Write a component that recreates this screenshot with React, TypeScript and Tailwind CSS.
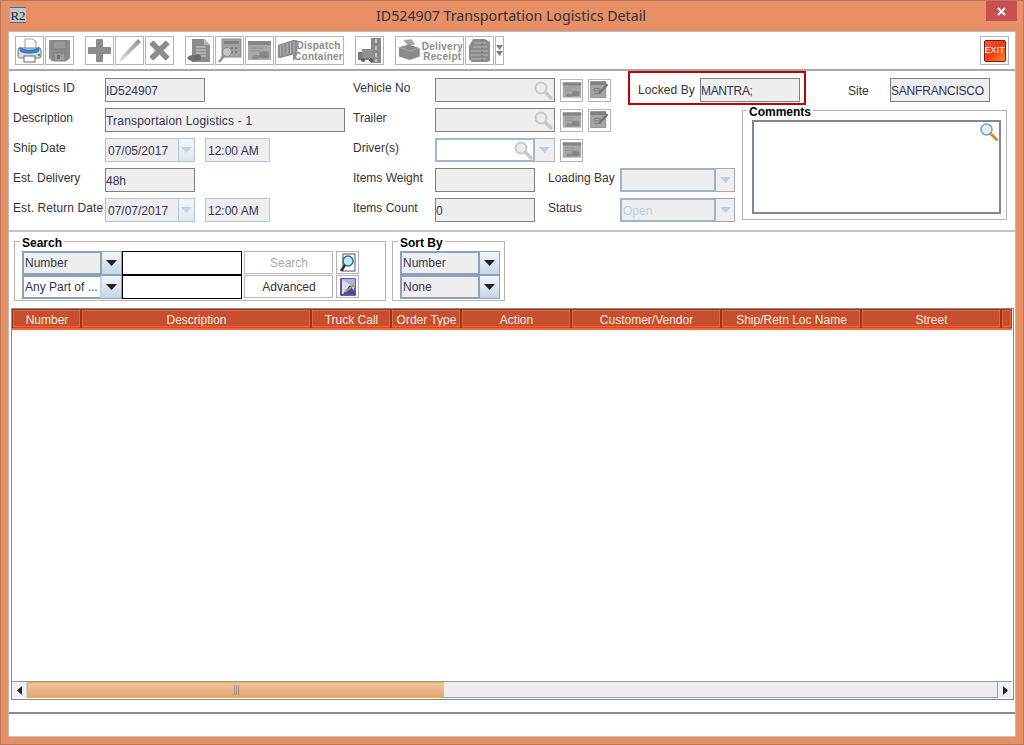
import React from "react";

const G = "#8c8c8c";

function Btn({ w = "w-[29px]", children }: { w?: string; children?: React.ReactNode }) {
  return (
    <div className={`${w} h-[29px] border border-[#b4b4b4] bg-white flex items-center justify-center overflow-hidden shrink-0`}>
      {children}
    </div>
  );
}

function Svg({ children, s = 25 }: { children: React.ReactNode; s?: number }) {
  return (
    <svg width={s} height={s} viewBox="0 0 25 25">
      {children}
    </svg>
  );
}

const PrintIcon = () => (
  <Svg>
    <path d="M8 1h8l3 3v7H8z" fill="#fff" stroke="#8aa0b5" />
    <path d="M3 10h19a2 2 0 0 1 2 2v6a2 2 0 0 1-2 2H3a2 2 0 0 1-2-2v-6a2 2 0 0 1 2-2z" fill="#d8dde2" stroke="#777" />
    <path d="M3 9c2 4 17 4 19 0v4c-3 3-16 3-19 0z" fill="#2f86d8" stroke="#1f5f9f" strokeWidth="0.6" />
    <rect x="7" y="18" width="11" height="6" fill="#fff" stroke="#666" />
    <circle cx="22" cy="17" r="1.3" fill="#3db53d" />
  </Svg>
);
const SaveIcon = () => (
  <Svg>
    <path d="M2 3a1 1 0 0 1 1-1h19a1 1 0 0 1 1 1v17l-3 3H5l-3-3z" fill="#8c8c8c" />
    <rect x="6" y="3" width="13" height="8" fill="#9a9a9a" stroke="#7d7d7d" />
    <rect x="7" y="15" width="11" height="8" fill="#a0a0a0" stroke="#7a7a7a" />
    <rect x="10" y="17" width="3" height="4" fill="#6f6f6f" />
  </Svg>
);
const PlusIcon = () => (
  <Svg>
    <path d="M10 1h5a1 1 0 0 1 1 1v7h7a1 1 0 0 1 1 1v5a1 1 0 0 1-1 1h-7v7a1 1 0 0 1-1 1h-5a1 1 0 0 1-1-1v-7H2a1 1 0 0 1-1-1v-5a1 1 0 0 1 1-1h7V2a1 1 0 0 1 1-1z" fill={G} />
  </Svg>
);
const PenIcon = () => (
  <Svg>
    <defs>
      <linearGradient id="pen" x1="0" y1="1" x2="1" y2="0">
        <stop offset="0" stopColor="#e2e2e2" />
        <stop offset="1" stopColor="#8c8c8c" />
      </linearGradient>
    </defs>
    <path d="M21 1l3 3L7 21l-5 3 2-5z" fill="url(#pen)" />
  </Svg>
);
const XIcon = () => (
  <Svg>
    <path d="M7 3l5.500 5.500L18 3a1 1 0 0 1 1.500 0L22 5.500a1 1 0 0 1 0 1.500l-5.500 5.500L22 18a1 1 0 0 1 0 1.500L19.500 22a1 1 0 0 1-1.500 0l-5.500-5.500L7 22a1 1 0 0 1-1.500 0L3 19.500A1 1 0 0 1 3 18l5.500-5.500L3 7a1 1 0 0 1 0-1.500L5.500 3A1 1 0 0 1 7 3z" fill={G} />
  </Svg>
);
const DocIcon = () => (
  <Svg>
    <path d="M5 1h12l6 6v17H5z" fill="#8c8c8c" />
    <path d="M17 1l6 6h-6z" fill="#b5b5b5" />
    <path d="M9 9h10M9 12h10M9 15h10M12 18h7" stroke="#d5d5d5" />
    <ellipse cx="6" cy="20" rx="5.500" ry="3" fill="#707070" />
    <circle cx="11" cy="19.500" r="3" fill="#6a6a6a" />
  </Svg>
);
const CalcIcon = () => (
  <Svg>
    <rect x="5" y="1" width="19" height="18" fill="#a2a2a2" stroke="#8a8a8a" />
    <rect x="7" y="3" width="15" height="3" fill="#808080" />
    <path d="M14 9h2v2h-2zM18 9h2v2h-2zM14 13h2v2h-2zM18 13h2v2h-2zM8 9h2v2H8z" fill="#7a7a7a" />
    <circle cx="10" cy="14" r="4.500" fill="#c4c4c4" stroke="#888" />
    <path d="M7 18l-5 6" stroke="#888" strokeWidth="2" />
  </Svg>
);
const CashIcon = ({ s = 25 }: { s?: number }) => (
  <Svg s={s}>
    <rect x="1" y="3" width="23" height="19" fill="#a8a8a8" />
    <rect x="1" y="3" width="23" height="4" fill="#868686" />
    <path d="M4 10h12M4 13h9" stroke="#909090" />
    <ellipse cx="17" cy="15" rx="5" ry="2" fill="#8a8a8a" />
    <ellipse cx="17" cy="18" rx="5" ry="2" fill="#828282" />
    <ellipse cx="9" cy="19" rx="4" ry="2" fill="#8a8a8a" />
  </Svg>
);
const EditIcon = () => (
  <Svg s={23}>
    <rect x="2" y="2" width="18" height="19" fill="#a6a6a6" stroke="#8a8a8a" />
    <rect x="2" y="2" width="18" height="4" fill="#808080" />
    <path d="M6 10h7v3H6zM6 16h8" stroke="#757575" fill="none" />
    <path d="M21 4l2 2-9 10-3 1 1-3z" fill="#747474" />
  </Svg>
);
const ContainerIcon = () => (
  <svg width={26} height={27} viewBox="0 0 26 27">
    <path d="M1 7L19 1h5v16L5 22H1z" fill="#8c8c8c" />
    <path d="M4 8v12M8 6.500v13M12 5v13M16 4v13M20 3v13" stroke="#bdbdbd" />
    <path d="M19 18h5l-3 6-2 2z" fill="#8c8c8c" />
  </svg>
);
const RoadIcon = () => (
  <Svg>
    <path d="M14 0h10v25H14z" fill="#8a8a8a" />
    <path d="M19 1v4M19 8v4M19 15v4M19 21v3" stroke="#dcdcdc" strokeWidth="1.500" />
    <path d="M1 14h11v8H1z" fill="#7a7a7a" />
    <path d="M5 11h11v9H5z" fill="#909090" />
    <circle cx="6" cy="22" r="2" fill="#5e5e5e" />
    <circle cx="14" cy="22" r="2" fill="#5e5e5e" />
  </Svg>
);
const PrinterGrey = () => (
  <svg width={25} height={27} viewBox="0 0 25 27">
    <path d="M6 2l9-1 4 6-8 1z" fill="#a5a5a5" />
    <path d="M1 10l11-3 12 4v9l-11 4-12-4z" fill="#8c8c8c" />
    <path d="M1 10l12 4 11-3" fill="none" stroke="#aaa" />
  </svg>
);
const StackIcon = () => (
  <Svg>
    <path d="M6 1h12l5 3v19l-3 1H5l-3-3V8z" fill="#8c8c8c" />
    <path d="M7 5h12M6 9h14M4 13h17M4 17h17M4 21h15" stroke="#b8b8b8" />
    <path d="M15 1v22" stroke="#6e6e6e" strokeDasharray="2 2" />
  </Svg>
);
const ExitIcon = () => (
  <div className="w-[22px] h-[22px] rounded-[2px] border border-[#8a0f0f] bg-gradient-to-br from-[#f25a3a] via-[#ee3a10] to-[#ff8a20] flex items-center justify-center text-[9px] leading-none text-white font-['Liberation_Sans',sans-serif]">
    EXIT
  </div>
);

function Lens({ color = "#c8c8c8" }: { color?: string }) {
  return (
    <svg width="19" height="19" viewBox="0 0 19 19">
      <circle cx="7" cy="7" r="5.500" fill="#ececec" stroke={color} strokeWidth="2" />
      <path d="M11.500 11.500L17 17" stroke={color} strokeWidth="3.400" strokeLinecap="round" />
    </svg>
  );
}

function Arrow({ color = "#b7cfe8" }: { color?: string }) {
  return (
    <svg width="11" height="6" viewBox="0 0 11 6">
      <path d="M0 0h11L5.500 6z" fill={color} />
    </svg>
  );
}

function Label({ w, children, className = "" }: { w: string; children: React.ReactNode; className?: string }) {
  return <div className={`${w} shrink-0 text-[12px] leading-[14px] text-[#333] -mt-[4px] ${className}`}>{children}</div>;
}

function TF({ w, children, className = "" }: { w: string; children?: React.ReactNode; className?: string }) {
  return (
    <div className={`${w} h-6 shrink-0 border border-[#808080] bg-[#eeeeee] flex items-center pt-[1px] text-[12px] text-[#333350] whitespace-nowrap overflow-hidden ${className}`}>
      {children}
    </div>
  );
}

function DateField({ v }: { v: string }) {
  return (
    <div className="flex">
      <div className="w-[74px] h-6 border border-[#aec6dc] bg-[#eeeeee] flex items-center pl-[2px] pt-[1px] text-[12px] text-[#333350]">{v}</div>
      <div className="w-4 h-6 border border-[#aec6dc] border-l-0 bg-gradient-to-b from-[#f6f6f6] to-[#dde6ee] flex items-center justify-center">
        <Arrow color="#c3d3e3" />
      </div>
      <div className="w-[65px] h-6 ml-[10px] border border-[#aec6dc] bg-[#eeeeee] flex items-center pl-[2px] pt-[1px] text-[12px] text-[#333350]">12:00 AM</div>
    </div>
  );
}

function Row({ children }: { children: React.ReactNode }) {
  return <div className="h-6 flex items-center mb-[6px]">{children}</div>;
}

function DisCombo({ v }: { v?: string }) {
  return (
    <div className="flex">
      <div className="w-[96px] h-6 border-2 border-[#9eb4cb] bg-[#eeeeee] flex items-center pl-[1px] pt-[1px] text-[12px] text-[#bcd0e4]">{v}</div>
      <div className="w-[19px] h-6 border border-[#a8a8a8] border-l-0 bg-[#efefef] flex items-center justify-center">
        <Arrow />
      </div>
    </div>
  );
}

function Combo({ v, white, w = "w-[80px]" }: { v: string; white?: boolean; w?: string }) {
  return (
    <div className="flex">
      <div className={`${w} h-6 border-2 border-[#8ba2ba] ${white ? "bg-white border-r-[#c4d6e6]" : "bg-[#eeeeee]"} flex items-center pl-[1px] text-[12px] text-[#333350] whitespace-nowrap overflow-hidden`}>
        {v}
      </div>
      <div className="w-5 h-6 border border-[#8ba2ba] border-l-0 bg-gradient-to-b from-[#f4f7fa] to-[#c4d6e6] flex items-center justify-center">
        <svg width="11" height="6" viewBox="0 0 11 6">
          <path d="M0 0h11L5.500 6z" fill="#222" />
        </svg>
      </div>
    </div>
  );
}

function Fieldset({ title, className, legend = "left-[5px]", children }: { title: string; className: string; legend?: string; children: React.ReactNode }) {
  return (
    <div className={`relative border border-[#b4b4b4] ${className}`}>
      <div className={`absolute -top-[6px] ${legend} bg-white px-[2px] text-[12px] leading-[14px] font-bold text-black`}>{title}</div>
      {children}
    </div>
  );
}

const cols: [string, string][] = [
  ["w-[69px]", "Number"],
  ["w-[230px]", "Description"],
  ["w-[80px]", "Truck Call"],
  ["w-[70px]", "Order Type"],
  ["w-[110px]", "Action"],
  ["w-[150px]", "Customer/Vendor"],
  ["w-[140px]", "Ship/Retn Loc Name"],
  ["w-[140px]", "Street"],
  ["flex-1", ""],
];

export default function App() {
  return (
    <div className="w-[1024px] h-[745px] bg-[#e98f65] border border-[#b87758] flex flex-col overflow-hidden font-['Liberation_Sans',Arial,sans-serif]">
      {/* Title bar */}
      <div className="h-[30px] shrink-0 flex pl-[9px]">
        <div className="w-4 h-4 mt-[6px] bg-[#c0c6cc] border-t border-b border-[#3a6ea8] flex items-center justify-center text-[13px] leading-none text-[#222] font-['Liberation_Serif',serif]">
          R2
        </div>
        <div className="flex-1 pl-[10px] text-center text-[14.2px] leading-[29px] text-[#2b3440] font-['Noto_Sans',sans-serif]">
          ID524907 Transportation Logistics Detail
        </div>
        <div className="w-[31px] h-[20px] mr-[6px] bg-[#c75050] flex items-center justify-center">
          <svg width="9" height="9" viewBox="0 0 9 9">
            <path d="M1 1l7 7M8 1L1 8" stroke="#fff" strokeWidth="2" />
          </svg>
        </div>
      </div>

      {/* Window body */}
      <div className="flex-1 mx-[7px] mb-[7px] bg-white border-t border-x border-[#b8b8b8] flex flex-col min-h-0">
        {/* Toolbar */}
        <div className="h-[39px] shrink-0 border-b-2 border-[#a8a8a8] flex items-center px-[6px]">
          <div className="flex items-center gap-[1px]">
            <Btn><PrintIcon /></Btn>
            <Btn><SaveIcon /></Btn>
          </div>
          <div className="flex items-center gap-[1px] ml-[11px]">
            <Btn><PlusIcon /></Btn>
            <Btn><PenIcon /></Btn>
            <Btn><XIcon /></Btn>
          </div>
          <div className="flex items-center gap-[1px] ml-[11px]">
            <Btn><DocIcon /></Btn>
            <Btn><CalcIcon /></Btn>
            <Btn><CashIcon /></Btn>
            <Btn w="w-[69px]">
              <div className="flex items-center w-full h-full pl-[1px]">
                <ContainerIcon />
                <div className="-ml-[5px] text-[10px] leading-[11px] font-bold tracking-[0.25px] text-[#8c8c8c] text-center whitespace-nowrap">
                  Dispatch<br />Container
                </div>
              </div>
            </Btn>
          </div>
          <div className="ml-[11px]"><Btn><RoadIcon /></Btn></div>
          <div className="flex items-center gap-[1px] ml-[11px]">
            <Btn w="w-[69px]">
              <div className="flex items-center w-full h-full pl-[2px] gap-[1px]">
                <PrinterGrey />
                <div className="text-[10px] leading-[10px] mt-[3px] font-bold tracking-[0.3px] text-[#8c8c8c] text-center whitespace-nowrap">
                  Delivery<br />Receipt
                </div>
              </div>
            </Btn>
            <Btn><StackIcon /></Btn>
            <div className="w-[9px] h-[29px] border border-[#b4b4b4] flex flex-col items-center justify-center gap-[1px]">
              <svg width="7" height="5" viewBox="0 0 7 5"><path d="M0 0h7L3.500 5z" fill="#808080" /></svg>
              <svg width="7" height="5" viewBox="0 0 7 5"><path d="M0 0h7L3.500 5z" fill="#808080" /></svg>
            </div>
          </div>
          <div className="ml-auto">
            <Btn><ExitIcon /></Btn>
          </div>
        </div>

        {/* Form */}
        <div className="h-[161px] shrink-0 border-b-2 border-[#c4c4c4] flex pl-[5px]">
          <div className="w-[339px] shrink-0 pt-[7px] -ml-px">
            <Row><Label w="w-[92px]">Logistics ID</Label><TF w="w-[100px]">ID524907</TF></Row>
            <Row><Label w="w-[92px]">Description</Label><TF w="w-[240px]"><span className="tracking-[0.2px]">Transportaion Logistics - 1</span></TF></Row>
            <Row><Label w="w-[92px]">Ship Date</Label><DateField v="07/05/2017" /></Row>
            <Row><Label w="w-[92px]">Est. Delivery</Label><TF w="w-[90px]">48h</TF></Row>
            <Row><Label w="w-[92px]" className="whitespace-nowrap tracking-[0.1px]">Est. Return Date</Label><DateField v="07/07/2017" /></Row>
          </div>

          <div className="w-[275px] shrink-0 pt-[7px] ml-px">
            <Row>
              <Label w="w-[82px]">Vehicle No</Label>
              <TF w="w-[120px]" className="justify-end pr-[1px] !pt-0"><Lens /></TF>
              <div className="flex ml-[5px] gap-[5px]"><Btn w="w-[23px] !h-[23px]"><CashIcon s={20} /></Btn><Btn w="w-[23px] !h-[23px]"><EditIcon /></Btn></div>
            </Row>
            <Row>
              <Label w="w-[82px]">Trailer</Label>
              <TF w="w-[120px]" className="justify-end pr-[1px] !pt-0"><Lens /></TF>
              <div className="flex ml-[5px] gap-[5px]"><Btn w="w-[23px] !h-[23px]"><CashIcon s={20} /></Btn><Btn w="w-[23px] !h-[23px]"><EditIcon /></Btn></div>
            </Row>
            <Row>
              <Label w="w-[82px]">Driver(s)</Label>
              <div className="w-[100px] h-6 border-2 border-[#9eb9d6] bg-white flex items-center justify-end"><Lens /></div>
              <div className="w-5 h-6 border border-[#b4b4b4] border-l-0 bg-[#efefef] flex items-center justify-center"><Arrow /></div>
              <div className="ml-[5px]"><Btn w="w-[23px] !h-[23px]"><CashIcon s={20} /></Btn></div>
            </Row>
            <Row>
              <Label w="w-[82px]">Items Weight</Label>
              <TF w="w-[100px]" />
              <Label w="w-[72px]" className="ml-[13px] whitespace-nowrap">Loading Bay</Label>
              <DisCombo />
            </Row>
            <Row>
              <Label w="w-[82px]">Items Count</Label>
              <TF w="w-[100px]">0</TF>
              <Label w="w-[72px]" className="ml-[13px]">Status</Label>
              <DisCombo v="Open" />
            </Row>
          </div>

          <div className="flex-1 min-w-0">
            <div className="flex items-start">
              <div className="w-[178px] h-[34px] border-2 border-[#c00000] flex items-start pl-[8px] pt-[5px] shrink-0">
                <div className="w-[62px] shrink-0 mt-[5px] text-[12px] leading-[14px] text-[#333] tracking-[0.1px]">Locked By</div>
                <TF w="w-[100px]"><span className="tracking-[-0.35px]">MANTRA;</span></TF>
              </div>
              <div className="flex items-center mt-[7px] ml-[42px]">
                <div className="w-[42px] pt-[1px] text-[12px] leading-[14px] text-[#333]">Site</div>
                <TF w="w-[100px]"><span className="tracking-[-0.2px]">SANFRANCISCO</span></TF>
              </div>
            </div>
            <div className="flex justify-end pr-[8px] mt-[5px]">
              <Fieldset title="Comments" legend="left-[4px]" className="w-[265px] h-[110px] pt-[9px] pl-[9px] pr-[5px] pb-[5px]">
                <div className="w-full h-full border-2 border-[#7d8a96] relative">
                  <svg width="19" height="19" viewBox="0 0 19 19" className="absolute top-0 right-[1px]">
                    <circle cx="7.500" cy="7.500" r="5.500" fill="#d8f0fb" stroke="#7ba3bd" strokeWidth="1.500" />
                    <path d="M12 12l5.500 5.500" stroke="#d98a2b" strokeWidth="3" strokeLinecap="round" />
                  </svg>
                </div>
              </Fieldset>
            </div>
          </div>
        </div>

        {/* Search and sort */}
        <div className="flex pl-[5px] pt-[9px] shrink-0">
          <Fieldset title="Search" className="w-[372px] h-[60px] pl-[7px] pt-[9px]">
            <div className="flex">
              <Combo v="Number" />
              <div className="w-[120px] h-6 border border-black bg-white" />
              <div className="w-[89px] h-[23px] ml-[2px] border border-[#b4b4b4] bg-white flex items-center justify-center pt-[1px] pl-[1px] text-[12px] text-[#a8a8a8]">Search</div>
              <div className="ml-[3px]">
                <Btn w="w-[23px] !h-[23px]">
                  <svg width="20" height="20" viewBox="0 0 20 20">
                    <rect x="5" y="1" width="12" height="17" fill="#fff" stroke="#555" />
                    <circle cx="10" cy="8" r="5" fill="#bfe8f5" stroke="#2f6f8f" strokeWidth="1.500" />
                    <path d="M7 12l-4 6" stroke="#333" strokeWidth="2.500" />
                  </svg>
                </Btn>
              </div>
            </div>
            <div className="flex">
              <Combo v="Any Part of ..." white />
              <div className="w-[120px] h-6 border border-black bg-white" />
              <div className="w-[89px] h-[23px] ml-[2px] border border-[#b4b4b4] bg-white flex items-center justify-center pt-[1px] pl-[1px] text-[12px] text-[#333]">Advanced</div>
              <div className="ml-[3px]">
                <Btn w="w-[23px] !h-[23px]">
                  <svg width="20" height="20" viewBox="0 0 20 20">
                    <path d="M3 2h14v16H3z" fill="#dcdcf5" stroke="#2a2a7a" strokeWidth="1.500" />
                    <path d="M3 2l14 9v-9z" fill="#a8b4e8" />
                    <path d="M5 17l7-9 6 9z" fill="#3e4aa8" />
                    <path d="M7 15l9-7" stroke="#d98a2b" strokeWidth="2" />
                  </svg>
                </Btn>
              </div>
            </div>
          </Fieldset>
          <Fieldset title="Sort By" className="w-[113px] h-[60px] ml-[6px] pl-[7px] pt-[9px]">
            <Combo v="Number" />
            <Combo v="None" />
          </Fieldset>
        </div>

        {/* Table */}
        <div className="h-[392px] shrink-0 ml-[2px] mt-[7px] w-[1003px] border border-[#7d8c9b] pr-[1px] pb-[1px] flex flex-col">
          <div className="h-[21px] shrink-0 flex bg-[#c54f2f] border-b-2 border-[#fb6437]">
            {cols.map(([w, t], i) => (
              <div key={i} className={`${w} ${i === 8 ? "" : "shrink-0"} border border-[#8e3a20] border-b-0 outline outline-1 -outline-offset-2 outline-[#f0623a] flex items-center justify-center pt-[1px] pl-[1px] text-[12px] text-[#f6e6df] whitespace-nowrap`}>
                {t}
              </div>
            ))}
          </div>
          <div className="flex-1 bg-white" />
          <div className="h-[17px] shrink-0 flex border-t border-[#8ba2ba] bg-[#eeeeee]">
            <div className="w-[15px] bg-[#eef2f6] border-r border-[#c4d6e6] flex items-center justify-center">
              <svg width="5" height="9" viewBox="0 0 5 9"><path d="M5 0v9L0 4.500z" fill="#222" /></svg>
            </div>
            <div className="w-[417px] border-y border-l border-[#f4b41e] bg-gradient-to-b from-[#f0c4a4] to-[#e5a272] flex items-center justify-center gap-[1px]">
              <span className="w-[1px] h-[10px] bg-[#a8917f]" />
              <span className="w-[1px] h-[10px] bg-[#a8917f]" />
              <span className="w-[1px] h-[10px] bg-[#a8917f]" />
            </div>
            <div className="flex-1 border-b border-[#8ba2ba]" />
            <div className="w-[15px] bg-[#eef2f6] border-l border-[#8ba2ba] flex items-center justify-center">
              <svg width="5" height="9" viewBox="0 0 5 9"><path d="M0 0v9l5-4.500z" fill="#222" /></svg>
            </div>
          </div>
        </div>

        {/* Status bar */}
        <div className="flex-1" />
        <div className="h-[25px] shrink-0 border-t-2 border-b border-t-[#8c8c8c] border-b-[#c4c4c4] bg-white" />
      </div>
    </div>
  );
}
